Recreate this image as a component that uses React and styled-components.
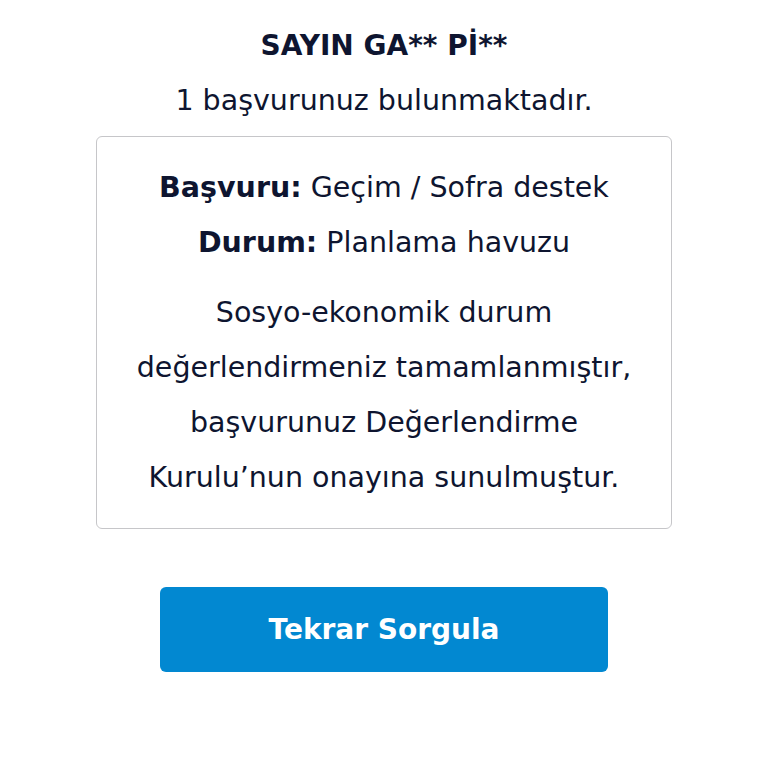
import React from 'react'
import styled, { createGlobalStyle } from 'styled-components'

const GlobalStyle = createGlobalStyle`
  html, body {
    margin: 0;
    padding: 0;
    background: #ffffff;
  }
  body {
    font-family: "DejaVu Sans", "Open Sans", sans-serif;
    color: #0e1530;
  }
`

function App () {
    return (
        <Page>
            <GlobalStyle />
            <Title>SAYIN GA** Pİ**</Title>
            <Subtitle>1 başvurunuz bulunmaktadır.</Subtitle>
            <Card>
                <Row><Label>Başvuru:</Label> Geçim / Sofra destek</Row>
                <Row><Label>Durum:</Label> Planlama havuzu</Row>
                <Message>
                    Sosyo-ekonomik durum<br />
                    değerlendirmeniz tamamlanmıştır,<br />
                    başvurunuz Değerlendirme<br />
                    Kurulu’nun onayına sunulmuştur.
                </Message>
            </Card>
            <Button type="button">Tekrar Sorgula</Button>
        </Page>
    )
}

export default App

const Page = styled.div`
display: flex;
flex-direction: column;
align-items: center;
padding-top: 18px;
`
const Title = styled.h1`
margin: 0;
font-size: 28px;
line-height: 55px;
font-weight: bold;
color: #0e1530;
`
const Subtitle = styled.p`
margin: 0;
font-size: 28.5px;
line-height: 55px;
color: #0e1530;
`
const Card = styled.div`
box-sizing: border-box;
width: 576px;
margin-top: 8px;
padding: 23px 10px 23px;
border: 1px solid #c6c6c9;
border-radius: 6px;
text-align: center;
`
const Row = styled.div`
font-size: 28.5px;
line-height: 55px;
`
const Label = styled.span`
font-weight: bold;
`
const Message = styled.p`
margin: 15px 0 0;
font-size: 28.5px;
line-height: 55px;
`
const Button = styled.button`
margin-top: 58px;
width: 448px;
height: 85px;
border: none;
border-radius: 6px;
background: #0288d1;
color: #ffffff;
font-family: inherit;
font-size: 28px;
font-weight: bold;
cursor: pointer;
`
